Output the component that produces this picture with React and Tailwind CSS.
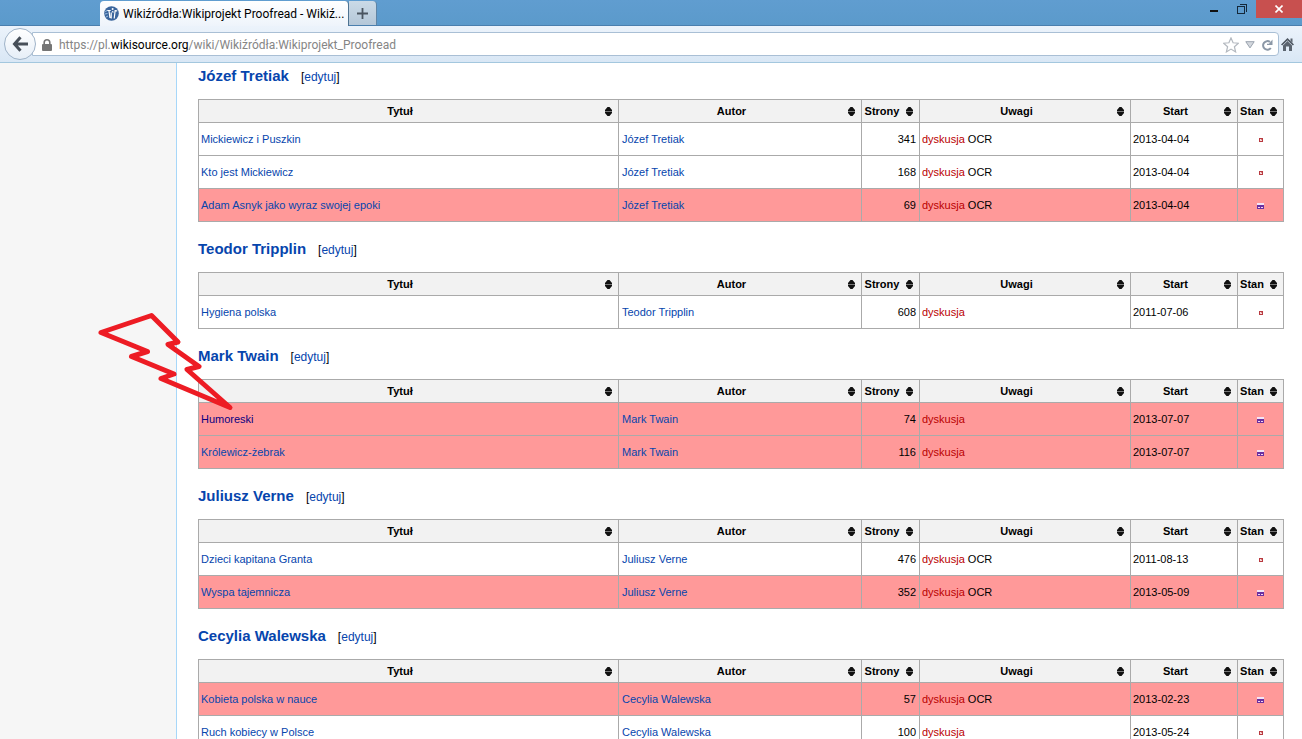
const columns = [
  { label: 'Tytuł', width: '' },
  { label: 'Autor', width: 'w-[243px]' },
  { label: 'Strony', width: 'w-[58px]' },
  { label: 'Uwagi', width: 'w-[211px]' },
  { label: 'Start', width: 'w-[107px]' },
  { label: 'Stan', width: 'w-[46px]' },
];

const sections = [
  {
    author: 'Józef Tretiak',
    books: [
      { title: 'Mickiewicz i Puszkin', pages: 341, ocr: true, start: '2013-04-04' },
      { title: 'Kto jest Mickiewicz', pages: 168, ocr: true, start: '2013-04-04' },
      { title: 'Adam Asnyk jako wyraz swojej epoki', pages: 69, ocr: true, start: '2013-04-04', active: true },
    ],
  },
  {
    author: 'Teodor Tripplin',
    books: [{ title: 'Hygiena polska', pages: 608, start: '2011-07-06' }],
  },
  {
    author: 'Mark Twain',
    books: [
      { title: 'Humoreski', pages: 74, start: '2013-07-07', active: true, visited: true },
      { title: 'Królewicz-żebrak', pages: 116, start: '2013-07-07', active: true },
    ],
  },
  {
    author: 'Juliusz Verne',
    books: [
      { title: 'Dzieci kapitana Granta', pages: 476, ocr: true, start: '2011-08-13' },
      { title: 'Wyspa tajemnicza', pages: 352, ocr: true, start: '2013-05-09', active: true },
    ],
  },
  {
    author: 'Cecylia Walewska',
    books: [
      { title: 'Kobieta polska w nauce', pages: 57, ocr: true, start: '2013-02-23', active: true },
      { title: 'Ruch kobiecy w Polsce', pages: 100, start: '2013-05-24' },
    ],
  },
];

function SortIcon() {
  return (
    <svg className="w-[7px] h-[9px]" viewBox="0 0 7 9" fill="#111">
      <path d="M2.500 0h2L7 3v1H0V3zM0 5h7v1L4.500 9h-2L0 6z" />
      <path d="M0 4h7v1H0z" fill="#777" />
    </svg>
  );
}

function StatusIcon({ active }) {
  if (active) {
    return (
      <svg className="w-[7px] h-[6px]" viewBox="0 0 7 6" shapeRendering="crispEdges">
        <path fill="#f3e4f5" d="M0 0h7v2H0z" />
        <path fill="#6a30a0" d="M0 2h7v4H0z" />
        <path fill="#f3d4f0" d="M1 4h2v1H1zM4 4h2v1H4z" />
      </svg>
    );
  }
  return (
    <svg className="w-[4px] h-[4px]" viewBox="0 0 4 4" shapeRendering="crispEdges">
      <path fill="#b83a40" d="M0 0h4v4H0z" />
      <path fill="#f7dcdc" d="M1 1h2v2H1z" />
      <path fill="#d98080" d="M2 1h1v1H2z" />
    </svg>
  );
}

function BookTable({ author, books }) {
  return (
    <table className="w-full table-fixed border-collapse border border-[#aaa] text-[11px] leading-4 text-black">
      <colgroup>
        {columns.map((col) => (
          <col key={col.label} className={col.width} />
        ))}
      </colgroup>
      <thead>
        <tr className="h-[23px] bg-[#f2f2f2]">
          {columns.map((col) => (
            <th key={col.label} scope="col" className="border border-[#aaa] p-0 font-bold">
              <button type="button" className="flex w-full items-center gap-1 pr-[6px]">
                <span className="flex-1 text-center">{col.label}</span>
                <SortIcon />
              </button>
            </th>
          ))}
        </tr>
      </thead>
      <tbody>
        {books.map((book) => (
          <tr key={book.title} className={`h-[33px] ${book.active ? 'bg-[#ff9999]' : 'bg-white'}`}>
            <td className="border border-[#aaa] px-[2px] py-0">
              <a href="#" className={book.visited ? 'text-[#0b0080]' : 'text-[#0645ad]'}>{book.title}</a>
            </td>
            <td className="border border-[#aaa] px-[3px] py-0">
              <a href="#" className="text-[#0645ad]">{author}</a>
            </td>
            <td className="border border-[#aaa] px-[3px] py-0 text-right">{book.pages}</td>
            <td className="border border-[#aaa] px-[2px] py-0">
              <a href="#" className="text-[#ba0000]">dyskusja</a>{book.ocr && ' OCR'}
            </td>
            <td className="border border-[#aaa] px-[2px] py-0">{book.start}</td>
            <td className="border border-[#aaa] p-0">
              <div className="flex justify-center pt-[2px]">
                <StatusIcon active={book.active} />
              </div>
            </td>
          </tr>
        ))}
      </tbody>
    </table>
  );
}

function TitleBar() {
  return (
    <div className="flex h-[26px] shrink-0 items-stretch justify-between bg-linear-to-b from-[#609dd0] to-[#5b9acb] border-b border-[#4a7fae]">
      <div className="flex pl-[100px]">
        <div className="-mb-px mt-px flex w-[249px] items-center gap-1 rounded-t-sm bg-linear-to-b from-white to-[#eef4fb] pl-1 border-r border-[#4d7291]">
          <svg className="size-[15px] shrink-0" viewBox="0 0 15 15">
            <circle cx="7.5" cy="7.5" r="7.3" fill="#3a659c" />
            <path d="M1.2 5.500 4 4.200M1 8l2.500-.5M2 11l2-1" stroke="#9dc0e2" fill="none" />
            <path d="M3.500 4.500h3.200M5 4.800l1 7.200M7.200 6.500v6M11.200 4l-1 8.500M8 5.500l1.500.8M11.600 4.600l1.600.3" stroke="#fff" strokeWidth="1.2" fill="none" />
            <circle cx="8.6" cy="3" r="1" fill="#fff" />
          </svg>
          <span className="whitespace-nowrap font-[Roboto,sans-serif] text-[12px] leading-4 text-black">
            Wikiźródła:Wikiprojekt Proofread - Wikiź...
          </span>
        </div>
        <button type="button" aria-label="Nowa karta" className="mt-px flex w-[28px] items-center justify-center rounded-tr-sm bg-linear-to-b from-[#cbdae7] to-[#b4c7d8] border-r border-[#5f84a5]">
          <svg className="size-[11px]" viewBox="0 0 11 11">
            <path d="M5.5 0v11M0 5.5h11" stroke="#4a5560" strokeWidth="1.8" />
          </svg>
        </button>
      </div>
      <div className="flex items-start">
        <button type="button" aria-label="Minimalizuj" className="flex h-[18px] w-[26px] items-center justify-center">
          <svg className="h-[10px] w-[10px]" viewBox="0 0 10 10">
            <path d="M1 6h8v2H1z" fill="#111" />
          </svg>
        </button>
        <button type="button" aria-label="Przywróć" className="flex h-[18px] w-[29px] items-center justify-center">
          <svg className="h-[10px] w-[10px]" viewBox="0 0 10 10" fill="none" stroke="#14283a" shapeRendering="crispEdges">
            <path d="M2.500.5h7v7M.5 2.500h7v7h-7z" />
          </svg>
        </button>
        <button type="button" aria-label="Zamknij" className="flex h-[18px] w-[46px] items-center justify-center bg-[#c8504f]">
          <svg className="size-[8px]" viewBox="0 0 8 8">
            <path d="m.5.5 7 7m0-7-7 7" stroke="#fff" strokeWidth="1.6" />
          </svg>
        </button>
      </div>
    </div>
  );
}

function NavBar() {
  return (
    <div className="flex h-[37px] shrink-0 items-center border-b border-[#a3c7de] bg-linear-to-b from-[#ecf3fb] to-[#d9e7f5] pl-1 font-[Roboto,sans-serif]">
      <button type="button" aria-label="Wstecz" className="z-10 flex size-[32px] shrink-0 items-center justify-center rounded-full border border-[#9fb3c8] bg-linear-to-b from-white to-[#e6eef7]">
        <svg className="size-[16px]" viewBox="0 0 16 16" fill="none" stroke="#474f59" strokeWidth="3">
          <path d="M8.5 1.2 2.5 8l6 6.8M2.5 8H16" />
        </svg>
      </button>
      <div className="-ml-1 flex h-[24px] flex-1 items-center rounded-r-sm border border-[#a9bfd5] bg-white pl-[9px] pr-[5px] pt-px">
        <svg className="h-[12px] w-[10px] shrink-0" viewBox="0 0 10 12">
          <path d="M2.2 6V3.6a2.8 2.8 0 0 1 5.6 0V6" fill="none" stroke="#757575" strokeWidth="1.6" />
          <rect y="5" width="10" height="7" rx="1" fill="#757575" />
        </svg>
        <div className="flex-1 whitespace-nowrap pl-[7px] text-[12px] leading-4 text-[#858585]">
          https://pl.<span className="text-black">wikisource.org</span>/wiki/Wikiźródła:Wikiprojekt_Proofread
        </div>
        <div className="flex items-center gap-[6px]">
          <button type="button" aria-label="Dodaj zakładkę">
            <svg className="block size-[16px]" viewBox="0 0 16 16" fill="#fff" stroke="#b3b8bf" strokeWidth="1.2">
              <path d="m8 .9 2.1 4.9 5.3.4-4 3.5 1.2 5.2L8 12.1l-4.6 2.8 1.2-5.2-4-3.5 5.3-.4z" />
            </svg>
          </button>
          <button type="button" aria-label="Historia">
            <svg className="block h-[8px] w-[10px]" viewBox="0 0 10 8" fill="#d4d8de" stroke="#9aa3ae">
              <path d="M.8.7h8.400L5 6.900z" />
            </svg>
          </button>
          <button type="button" aria-label="Odśwież">
            <svg className="block size-[12px]" viewBox="0 0 12 12">
              <path d="M9 3A4.300 4.300 0 1 0 9.800 9" fill="none" stroke="#8b97a6" strokeWidth="2" />
              <path d="M11.500.5v5.500H6V4.800h2z" fill="#8b97a6" />
            </svg>
          </button>
        </div>
      </div>
      <button type="button" aria-label="Strona startowa" className="ml-[2px] mr-[8px]">
        <svg className="block size-[13px]" viewBox="0 0 13 13">
          <path d="M.6 7 6.5 1.2 12.4 7" fill="none" stroke="#4d5660" strokeWidth="1.7" />
          <path d="M9.500.5h2v4.300l-2-1.800zM2 7.500 6.500 3 11 7.500V13H8V8.500H5V13H2z" fill="#5b646f" />
        </svg>
      </button>
    </div>
  );
}

export default function App() {
  return (
    <div className="relative flex h-screen flex-col overflow-hidden bg-white font-['Liberation_Sans',Arial,sans-serif]">
      <TitleBar />
      <NavBar />
      <div className="flex min-h-0 flex-1">
        <aside className="w-[177px] shrink-0 border-r border-[#a7d7f9] bg-[#f6f6f6]" />
        <main className="flex min-w-0 flex-1 flex-col gap-[14px] overflow-hidden pl-[21px] pr-[18px]">
          {sections.map((section) => (
            <section key={section.author}>
              <div className="mb-[9px] flex items-baseline gap-[12px] leading-[26px]">
                <h3 className="text-[15px] font-bold text-[#0645ad]">{section.author}</h3>
                <span className="text-[12px] text-black">
                  [<a href="#" className="text-[#0645ad]">edytuj</a>]
                </span>
              </div>
              <BookTable author={section.author} books={section.books} />
            </section>
          ))}
        </main>
      </div>

      {/* lightning arrow pointing at Humoreski */}
      <svg className="pointer-events-none absolute left-[96px] top-[310px] z-20 h-[104px] w-[140px]" viewBox="96 310 140 104" fill="none" stroke="#ed1c24" strokeWidth="5" strokeLinejoin="round">
        <path d="M101 332.500 151.500 315.500 178 342 168 344.500 199 366.500 187 369.500 230 407.500 161 378.500 174 374 131.500 356.500 147.500 351.500Z" />
      </svg>
    </div>
  );
}
